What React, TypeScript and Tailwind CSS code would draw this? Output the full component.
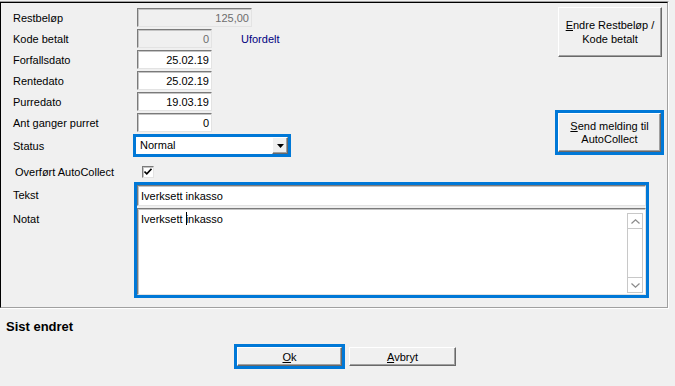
import type { ReactNode } from 'react';

const sunken =
  'border border-t-[#7a7a7a] border-l-[#7a7a7a] border-b-[#e3e3e3] border-r-[#e3e3e3] shadow-[inset_1px_1px_0_#c4c4c4]';
const raised =
  'border border-t-white border-l-white border-b-[#696969] border-r-[#696969] shadow-[inset_-1px_-1px_0_#a0a0a0] bg-[#f0f0f0]';

function Row({ label, children }: { label: string; children: ReactNode }) {
  return (
    <div className="flex items-center h-[19px] mb-[2px]">
      <span className="w-[124px] leading-[14px]">{label}</span>
      {children}
    </div>
  );
}

function Field({ value, width, disabled }: { value: string; width: string; disabled?: boolean }) {
  return (
    <div
      className={`${width} h-[19px] ${sunken} ${disabled ? 'bg-[#f0f0f0] text-[#6d6d6d]' : 'bg-white'} flex items-center justify-end pr-[2px] leading-[14px]`}
    >
      {value}
    </div>
  );
}

function Button({ children, className }: { children: ReactNode; className: string }) {
  return (
    <div className={`${raised} ${className} flex flex-col items-center justify-center text-center`}>
      {children}
    </div>
  );
}

export default function App() {
  return (
    <div className="w-[675px] h-[386px] bg-[#f0f0f0] overflow-hidden text-[11px] text-black font-['Liberation_Sans',Arial,sans-serif]">
      <div className="mt-px w-[669px] border-t border-r border-b border-t-[#a0a0a0] border-r-white border-b-white">
        <div className="h-[306px] border border-t-black border-l-black border-r-[#a0a0a0] border-b-[#a0a0a0] flex flex-col">
          <div className="flex justify-between h-[179px]">
            <div className="pt-[5px] pl-[12px]">
              <Row label="Restbeløp">
                <Field value="125,00" width="w-[115px]" disabled />
              </Row>
              <Row label="Kode betalt">
                <Field value="0" width="w-[75px]" disabled />
                <span className="ml-[29px] text-[#000080] leading-[14px]">Ufordelt</span>
              </Row>
              <Row label="Forfallsdato">
                <Field value="25.02.19" width="w-[75px]" />
              </Row>
              <Row label="Rentedato">
                <Field value="25.02.19" width="w-[75px]" />
              </Row>
              <Row label="Purredato">
                <Field value="19.03.19" width="w-[75px]" />
              </Row>
              <Row label="Ant ganger purret">
                <Field value="0" width="w-[75px]" />
              </Row>

              <div className="flex items-center mt-[1px] h-[23px]">
                <span className="w-[120px] leading-[14px]">Status</span>
                <div className="w-[158px] h-[23px] border-[3px] border-[#0078d7] bg-white flex">
                  <span className="flex-1 pl-[4px] leading-[17px]">Normal</span>
                  <div className={`${raised} w-[16px] h-full flex items-center justify-center`}>
                    <svg width="7" height="4" viewBox="0 0 7 4">
                      <path d="M0 0h7L3.5 4z" fill="#000" />
                    </svg>
                  </div>
                </div>
              </div>

              <div className="flex items-center mt-[5px] h-[19px]">
                <span className="w-[129px] pl-[2px] leading-[14px]">Overført AutoCollect</span>
                <div className={`w-[12px] h-[12px] bg-white ${sunken} flex items-center justify-center`}>
                  <svg width="8" height="7" viewBox="0 0 8 7">
                    <path d="M0.5 3.5L2.8 5.8L7.5 0.8" stroke="#000" strokeWidth="1.6" fill="none" />
                  </svg>
                </div>
              </div>
            </div>

            <div className="flex flex-col items-end pr-[3px]">
              <Button className="w-[104px] h-[50px] mt-[4px] mr-[2px] leading-[14px]">
                <span>
                  <u>E</u>ndre Restbeløp /
                </span>
                <span>Kode betalt</span>
              </Button>
              <div className="mt-[53px] border-[3px] border-[#0078d7]">
                <Button className="w-[103px] h-[39px] leading-[13px]">
                  <span>
                    <u>S</u>end melding til
                  </span>
                  <span>AutoCollect</span>
                </Button>
              </div>
            </div>
          </div>

          <div className="flex pl-[12px]">
            <div className="w-[121px] pt-[6px] leading-[14px]">
              <div>Tekst</div>
              <div className="mt-[10px]">Notat</div>
            </div>
            <div className="w-[515px] h-[116px] border-[3px] border-[#0078d7] flex flex-col">
              <div className={`h-[21px] bg-white ${sunken} flex items-center pl-[3px] leading-[14px]`}>
                Iverksett inkasso
              </div>
              <div className={`mt-[2px] flex-1 bg-white ${sunken} flex`}>
                <div className="flex-1 pl-[3px] pt-[3px] leading-[14px]">
                  Iverksett <span className="inline-block w-px h-[13px] bg-black align-[-2px] -mr-px" />inkasso
                </div>
                <div className="w-[16px] mt-[4px] mb-px mr-[2px] border border-[#c8c8c8] flex flex-col justify-between">
                  <div className="h-[15px] border-b border-[#c8c8c8] flex items-center justify-center">
                    <svg width="9" height="5" viewBox="0 0 9 5">
                      <path d="M0.5 4.5L4.5 0.8L8.5 4.5" stroke="#8a8a8a" strokeWidth="1.2" fill="none" />
                    </svg>
                  </div>
                  <div className="h-[15px] border-t border-[#c8c8c8] flex items-center justify-center">
                    <svg width="9" height="5" viewBox="0 0 9 5">
                      <path d="M0.5 0.5L4.5 4.2L8.5 0.5" stroke="#8a8a8a" strokeWidth="1.2" fill="none" />
                    </svg>
                  </div>
                </div>
              </div>
            </div>
          </div>
        </div>
      </div>

      <div className="ml-[6px] mt-[10px] text-[13px] font-bold leading-[16px]">Sist endret</div>

      <div className="flex items-center gap-[4px] pl-[234px] mt-[9px]">
        <div className="border-[3px] border-[#0078d7]">
          <Button className="w-[105px] h-[19px] leading-[14px]">
            <span>
              <u>O</u>k
            </span>
          </Button>
        </div>
        <Button className="w-[107px] h-[19px] leading-[14px]">
          <span>
            <u>A</u>vbryt
          </span>
        </Button>
      </div>
    </div>
  );
}
